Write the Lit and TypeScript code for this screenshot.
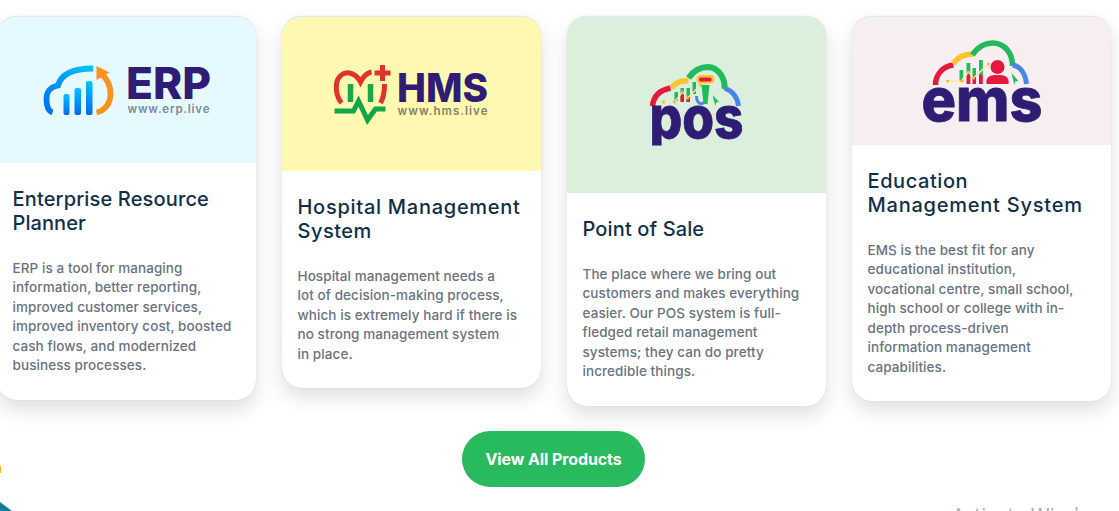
import { LitElement, html, css, svg } from "lit";
import { customElement } from "lit/decorators.js";

const cloudLine = (pts: string) => svg`<polyline points=${pts} fill="none" stroke="#fbe9a8" stroke-width="1.4"/>
${pts.split(" ").map((p) => { const [x, y] = p.split(","); return svg`<circle cx=${x} cy=${y} r="1.6" fill="#f6bb2e"/>`; })}`;

const erpLogo = svg`
<defs><linearGradient id="eg" x1="0" y1="0" x2="0" y2="1"><stop offset="0" stop-color="#00c4ff"/><stop offset="1" stop-color="#0068f0"/></linearGradient>
<linearGradient id="ec" gradientUnits="userSpaceOnUse" x1="92" y1="66" x2="48" y2="115"><stop offset="0" stop-color="#00c4ff"/><stop offset="1" stop-color="#0070f0"/></linearGradient></defs>
<path d="M52 112.500C47.500 111 46 105 46 99C46 91.500 50.500 86.500 57.500 85.500C60.500 74.500 73 68.500 92.500 68.500" fill="none" stroke="url(#ec)" stroke-width="5.800"/>
<rect x="63" y="94" width="6" height="21" rx="2" fill="url(#eg)"/><rect x="74" y="88" width="6.500" height="27" rx="2" fill="url(#eg)"/><rect x="85.500" y="81" width="6.500" height="34" rx="2" fill="url(#eg)"/>
<path d="M96 66L109 72.500L96 80Z" fill="#f9931f"/>
<path d="M100 73C108 80 110.500 87 110 95C109.500 104 104 111 96 112.500" fill="none" stroke="#f9931f" stroke-width="5.800"/>
<text class="mark" x="125.500" y="98.500" font-size="44" textLength="85" lengthAdjust="spacingAndGlyphs" fill="#2e1c75">ERP</text>
<text class="url" x="127" y="113" font-size="11.500" textLength="82" lengthAdjust="spacing" fill="#808b95">www.erp.live</text>`;

const hmsLogo = svg`
<path d="M341 103C336 97 335.500 89 336 84C337 76 343 72 349 73C354 74 358 78 360 82C362 78 366 73 371 72" fill="none" stroke="#e1322c" stroke-width="5"/>
<path d="M384 84C384 92 383 98 380 103" fill="none" stroke="#e1322c" stroke-width="5"/>
<path d="M382 65V81M374 73H390" stroke="#e1322c" stroke-width="5" fill="none"/>
<path d="M350 84V102M370 84V102" stroke="#1aa84a" stroke-width="5.500" fill="none"/>
<path d="M334 111H353L358 101L367 120L375 109H385" stroke="#10a846" stroke-width="5" fill="none"/>
<text class="mark" x="396.500" y="101.500" font-size="40" textLength="91" lengthAdjust="spacingAndGlyphs" fill="#2e1c75">HMS</text>
<text class="url" x="397" y="115" font-size="11.500" textLength="90" lengthAdjust="spacing" fill="#7f8468">www.hms.live</text>`;

const posLogo = svg`
<defs><clipPath id="pc"><rect x="640" y="90" width="120" height="55.500"/></clipPath></defs>
<path d="M652 106C653 96 660 90 670 88" fill="none" stroke="#e6183e" stroke-width="5.500"/>
<path d="M671 88C675 83 681 80 688 81" fill="none" stroke="#f9c42e" stroke-width="5.500"/>
<path d="M688 78C694 69 702 67 708 67C718 68 725 78 724 89" fill="none" stroke="#21ba5d" stroke-width="6"/>
<path d="M724 88C732 91 737 97 738 106" fill="none" stroke="#4a86e8" stroke-width="5"/>
<g fill="#21ba5d"><rect x="674" y="92" width="3.500" height="9"/><rect x="680" y="88" width="3.500" height="13"/><rect x="686" y="88" width="3.500" height="14"/><rect x="692" y="82" width="3.500" height="12"/></g>
<g fill="#e6183e"><rect x="680" y="94" width="3.500" height="8"/><rect x="686" y="96" width="3.500" height="6"/></g>
${cloudLine("663,102 674,102 682,92 687,98 700,85")}
<path d="M696 96C696 106 705 106 706 97" fill="none" stroke="#4a86e8" stroke-width="3"/>
<path d="M701 85H709L707 104H703Z" fill="#21ba5d"/>
<rect x="696" y="75" width="18" height="8.500" rx="4" fill="#f9c42e"/><rect x="698.500" y="77.500" width="12.500" height="4" rx="1.500" fill="#e6183e"/>
<path d="M712 95L718.500 102L715.500 102.500L715 106.500Z" fill="#21ba5d"/>
<g clip-path="url(#pc)"><text class="mark heavy" x="649" y="138" font-size="58" textLength="94" lengthAdjust="spacingAndGlyphs" fill="#2e1c75">pos</text></g>`;

const emsLogo = svg`
<path d="M935 85C935 74 943 66 953 65" fill="none" stroke="#e6183e" stroke-width="5.500"/>
<path d="M953 64C957 57 964 54 973 54" fill="none" stroke="#f9c42e" stroke-width="5.500"/>
<path d="M972 55C977 47 985 43 992 43C1004 43 1012 53 1012 66" fill="none" stroke="#21ba5d" stroke-width="5.500"/>
<path d="M1012 65C1020 66 1025 74 1026 84" fill="none" stroke="#4a86e8" stroke-width="5"/>
<g fill="#21ba5d"><rect x="959" y="70" width="3.800" height="12"/><rect x="966" y="63" width="3.800" height="12"/><rect x="972" y="68" width="3.500" height="8"/><rect x="978.500" y="60" width="3.800" height="15"/></g>
<g fill="#e6183e"><rect x="966" y="74" width="3.800" height="10"/><rect x="972" y="76" width="3.500" height="8"/><rect x="978.500" y="75" width="3.800" height="9"/></g>
${cloudLine("947,81 961,81 968,72 973,78 988,64")}
<circle cx="997" cy="67" r="7" fill="#e6183e"/><path d="M986 84C985 76 990 75 997 75C1004 75 1009 76 1008 84Z" fill="#e6183e"/>
<path d="M1011 73L1018 81L1014.500 81.500L1014 85.500Z" fill="#21ba5d"/>
<text class="mark heavy" x="921" y="120.500" font-size="60" textLength="121" lengthAdjust="spacingAndGlyphs" fill="#2e1c75">ems</text>`;

type Line = [string, number];
const cards: { title: Line[]; text: string[]; bg: string; h: number; x: number; logo: unknown }[] = [
  { title: [["Enterprise Resource", 0.15], ["Planner", 0.07]], text: ["ERP is a tool for managing", "information, better reporting,", "improved customer services,", "improved inventory cost, boosted", "cash flows, and modernized", "business processes."], bg: "#e6f9ff", h: 146, x: -3.5, logo: erpLogo },
  { title: [["Hospital Management", 0.73], ["System", 0.5]], text: ["Hospital management needs a", "lot of decision-making process,", "which is extremely hard if there is", "no strong management system", "in place."], bg: "#fef8b0", h: 154, x: 281.5, logo: hmsLogo },
  { title: [["Point of Sale", 0.13]], text: ["The place where we bring out", "customers and makes everything", "easier. Our POS system is full-", "fledged retail management", "systems; they can do pretty", "incredible things."], bg: "#dbefdc", h: 176, x: 566.5, logo: posLogo },
  { title: [["Education", 0.58], ["Management System", 0.77]], text: ["EMS is the best fit for any", "educational institution,", "vocational centre, small school,", "high school or college with in-", "depth process-driven", "information management", "capabilities."], bg: "#f7eef0", h: 128, x: 851.5, logo: emsLogo },
];

@customElement("app-root")
export class AppRoot extends LitElement {
  static styles = css`
    :host { display: block; position: relative; height: 511px; overflow: hidden; background: #fff; font-family: Inter, "Noto Sans", sans-serif; }
    .section { width: 1115px; margin-left: -3.5px; padding-top: 16px; display: flex; flex-direction: column; align-items: center; }
    .row { display: flex; gap: 25.5px; align-items: flex-start; width: 100%; }
    .card { box-sizing: border-box; width: 259.500px; flex: none; background: #fff; border-top: 1px solid rgba(95,105,165,.16); border-radius: 20px; overflow: hidden; box-shadow: 0 9px 20px rgba(0,0,0,.13), 0 0 1px rgba(60,70,110,.25); }
    .media { display: block; }
    .media svg { display: block; width: 260px; }
    .body { padding: 24px 16px 24px; }
    h3 { margin: 0 0 23.9px; font-size: 20px; line-height: 24px; font-weight: 500; color: #10304a; white-space: nowrap; }
    p { margin: 0; font-size: 13.5px; line-height: 19.5px; font-weight: 450; letter-spacing: .08px; color: #69737e; white-space: nowrap; }
    .line { display: block; }
    .btn { margin: 25px 1px 0 0; width: 183px; height: 56px; border: 0; border-radius: 28px; background: #28ba5c; color: #fff; font: 700 16px Inter, sans-serif; letter-spacing: -0.1px; display: flex; align-items: center; justify-content: center; padding: 0; }
    .mark { font-family: Inter, sans-serif; font-weight: 800; }
    .heavy { stroke: #2e1c75; stroke-width: .8px; }
    .url { font-family: Inter, sans-serif; font-weight: 600; }
    .dot { position: absolute; left: -4px; top: 466px; width: 5px; height: 7px; background: #fbb80f; }
    .tri { position: absolute; left: 0; top: 502px; width: 0; height: 0; border-bottom: 9px solid #157a9c; border-right: 12px solid transparent; }
    .watermark { position: absolute; left: 952px; top: 501px; font: 400 20px "Open Sans", sans-serif; color: #a9a9a9; white-space: nowrap; }
  `;

  render() {
    return html`
      <div class="section">
        <div class="row">
          ${cards.map((c) => html`
            <article class="card">
              <div class="media" style="background:${c.bg}">
                <svg height=${c.h} viewBox="${c.x} 17 260 ${c.h}">${c.logo}</svg>
              </div>
              <div class="body">
                <h3>${c.title.map(([t, ls]) => html`<span class="line" style="letter-spacing:${ls}px">${t}</span>`)}</h3>
                <p>${c.text.map((t) => html`<span class="line">${t}</span>`)}</p>
              </div>
            </article>`)}
        </div>
        <button class="btn">View All Products</button>
      </div>
      <span class="dot"></span>
      <span class="tri"></span>
      <span class="watermark">Activate Windows</span>
    `;
  }
}
